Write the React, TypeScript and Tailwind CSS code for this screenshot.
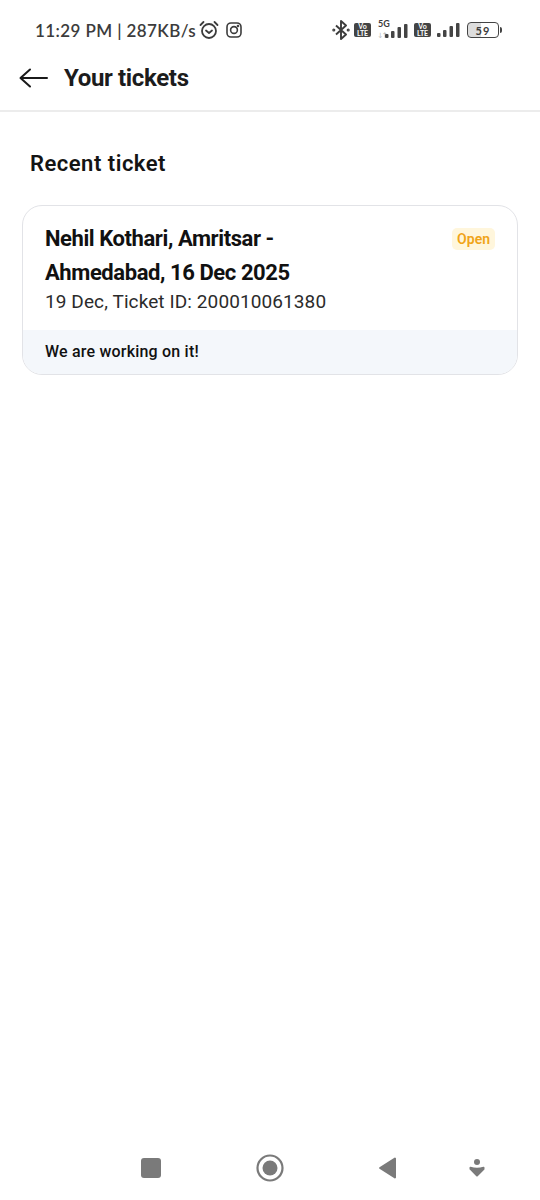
import React from "react";

function Bars({ className = "" }: { className?: string }) {
  return (
    <svg width="23" height="16" viewBox="0 0 23 16" className={className} fill="#444">
      <rect x="0" y="11" width="3.5" height="4" rx="1" />
      <rect x="6" y="8" width="3.5" height="7" rx="1" />
      <rect x="12.500" y="4" width="3.5" height="11" rx="1" />
      <rect x="19" y="1" width="3.5" height="14" rx="1" />
    </svg>
  );
}

function VoLte() {
  return (
    <div className="flex h-[14px] w-[17px] flex-col items-center justify-center rounded-[2px] bg-[#444] text-[7px] font-bold leading-[7px] text-white">
      <span>Vo</span>
      <span>LTE</span>
    </div>
  );
}

function StatusBar() {
  return (
    <div className="flex h-[60px] items-center justify-between pl-[35px] pr-[38px] font-['Lato',sans-serif] text-[#3c3c3c]">
      <div className="flex items-center gap-[2px]">
        <span className="w-[161px] whitespace-nowrap text-[17px] font-semibold leading-none tracking-[0.4px]">11:29 PM | 287KB/s</span>
        <svg width="22" height="22" viewBox="0 0 22 22" fill="none" stroke="#3c3c3c" strokeWidth="1.8" strokeLinecap="round" strokeLinejoin="round">
          <circle cx="11" cy="12" r="7" />
          <path d="M8 11.5l3 2.5 3-2.5" />
          <path d="M2.5 6l3-3M19.5 6l-3-3" />
        </svg>
        <svg width="18" height="18" viewBox="0 0 18 18" fill="none" stroke="#3c3c3c" strokeWidth="1.6" className="ml-[3px]">
          <rect x="2" y="2" width="14" height="14" rx="4" />
          <circle cx="9" cy="9" r="3.4" />
          <circle cx="13" cy="5" r="0.5" fill="#3c3c3c" />
        </svg>
      </div>
      <div className="flex items-center">
        <svg width="18" height="20" viewBox="0 0 18 20" fill="none" stroke="#3c3c3c" strokeWidth="1.9" strokeLinejoin="round">
          <path d="M4 5.5l10 9-5 4.5V1l5 4.5-10 9" />
          <circle cx="1.8" cy="10" r="0.6" />
          <circle cx="16.2" cy="10" r="0.6" />
        </svg>
        <div className="ml-[4px]"><VoLte /></div>
        <div className="relative ml-[7px] h-[20px] w-[30px]">
          <span className="absolute left-0 top-[-3px] text-[9px] font-bold">5G</span>
          <span className="absolute left-0 top-[11px] text-[6px] leading-[7px] text-[#aaa]">↓↑</span>
          <Bars className="absolute right-0 top-[3px]" />
        </div>
        <div className="ml-[6px]"><VoLte /></div>
        <Bars className="ml-[6px]" />
        <div className="ml-[7px] flex h-[16px] w-[32px] items-center justify-center rounded-[4px] border border-[#444] bg-[linear-gradient(90deg,#ddd_45%,#fff_45%)] text-[11px] font-bold leading-none tracking-[1px]">
          59
        </div>
        <div className="ml-[1px] h-[6px] w-[2px] rounded-r-sm bg-[#444]" />
      </div>
    </div>
  );
}

function NavBar() {
  return (
    <div className="flex h-[60px] items-center pb-[5px] pl-[141px]">
      <div className="h-[20px] w-[20px] rounded-[3px] bg-[#7a7a7a]" />
      <svg width="28" height="28" viewBox="0 0 28 28" className="ml-[95px]">
        <circle cx="14" cy="14" r="12.5" fill="none" stroke="#7a7a7a" strokeWidth="2.2" />
        <circle cx="14" cy="14" r="7.5" fill="#7a7a7a" />
      </svg>
      <svg width="20" height="24" viewBox="0 0 20 24" className="ml-[94px]">
        <path d="M18 2.5v19a1 1 0 0 1-1.6.7L1.5 12.8a1 1 0 0 1 0-1.6L16.4 1.8A1 1 0 0 1 18 2.5z" fill="#7a7a7a" />
      </svg>
      <svg width="18" height="20" viewBox="0 0 18 20" className="ml-[70px]">
        <circle cx="9" cy="4" r="3" fill="#7a7a7a" />
        <path d="M1.5 9.5c0-.6.6-1 1.2-.8 4.100 1.500 8.500 1.500 12.600 0 .6-.2 1.200.2 1.200.8v1.500c0 .3-.1.500-.3.700l-6.500 6.500a1 1 0 0 1-1.400 0L2 11.700c-.3-.2-.5-.4-.5-.7z" fill="#7a7a7a" />
      </svg>
    </div>
  );
}

export default function App() {
  return (
    <div className="flex h-[1200px] w-[540px] flex-col bg-white font-['Roboto',sans-serif]">
      <StatusBar />
      <header className="flex h-[52px] items-center border-b-2 border-[#ececec] pb-[14px] pl-[19px]">
        <svg width="29" height="20" viewBox="0 0 29 20" fill="none" stroke="#1a1a1a" strokeWidth="2" strokeLinecap="round" strokeLinejoin="round">
          <path d="M28 10H2M11 1.500L1.500 10l9.500 8.500" />
        </svg>
        <h1 className="ml-[16px] text-[24px] font-bold tracking-[-0.35px] text-[#1c1c1c]">Your tickets</h1>
      </header>
      <main className="flex-1 px-[22px]">
        <h2 className="ml-[8px] mt-[37px] text-[22px] font-semibold leading-[30px] tracking-[0.5px] text-[#141414]">Recent ticket</h2>
        <section className="mt-[26px] overflow-hidden rounded-[20px] border border-[#e2e3e7]">
          <div className="flex items-start justify-between pb-[16px] pl-[22px] pr-[22px] pt-[16px]">
            <div>
              <p className="w-[300px] text-[22px] font-bold leading-[34px] tracking-[-0.42px] text-[#111]">
                Nehil Kothari, Amritsar - Ahmedabad, 16 Dec 2025
              </p>
              <p className="text-[19px] leading-[24px] tracking-[0.1px] text-[#2b2b2b]">19 Dec, Ticket ID: 200010061380</p>
            </div>
            <span className="mt-[6px] rounded-[5px] bg-[#fff6dc] px-[5px] py-[1px] text-[14px] font-semibold leading-[20px] text-[#f0a418]">Open</span>
          </div>
          <div className="flex h-[44px] items-center bg-[#f4f7fb] pl-[22px] text-[16px] font-medium tracking-[0.2px] text-[#111]">We are working on it!</div>
        </section>
      </main>
      <NavBar />
    </div>
  );
}
